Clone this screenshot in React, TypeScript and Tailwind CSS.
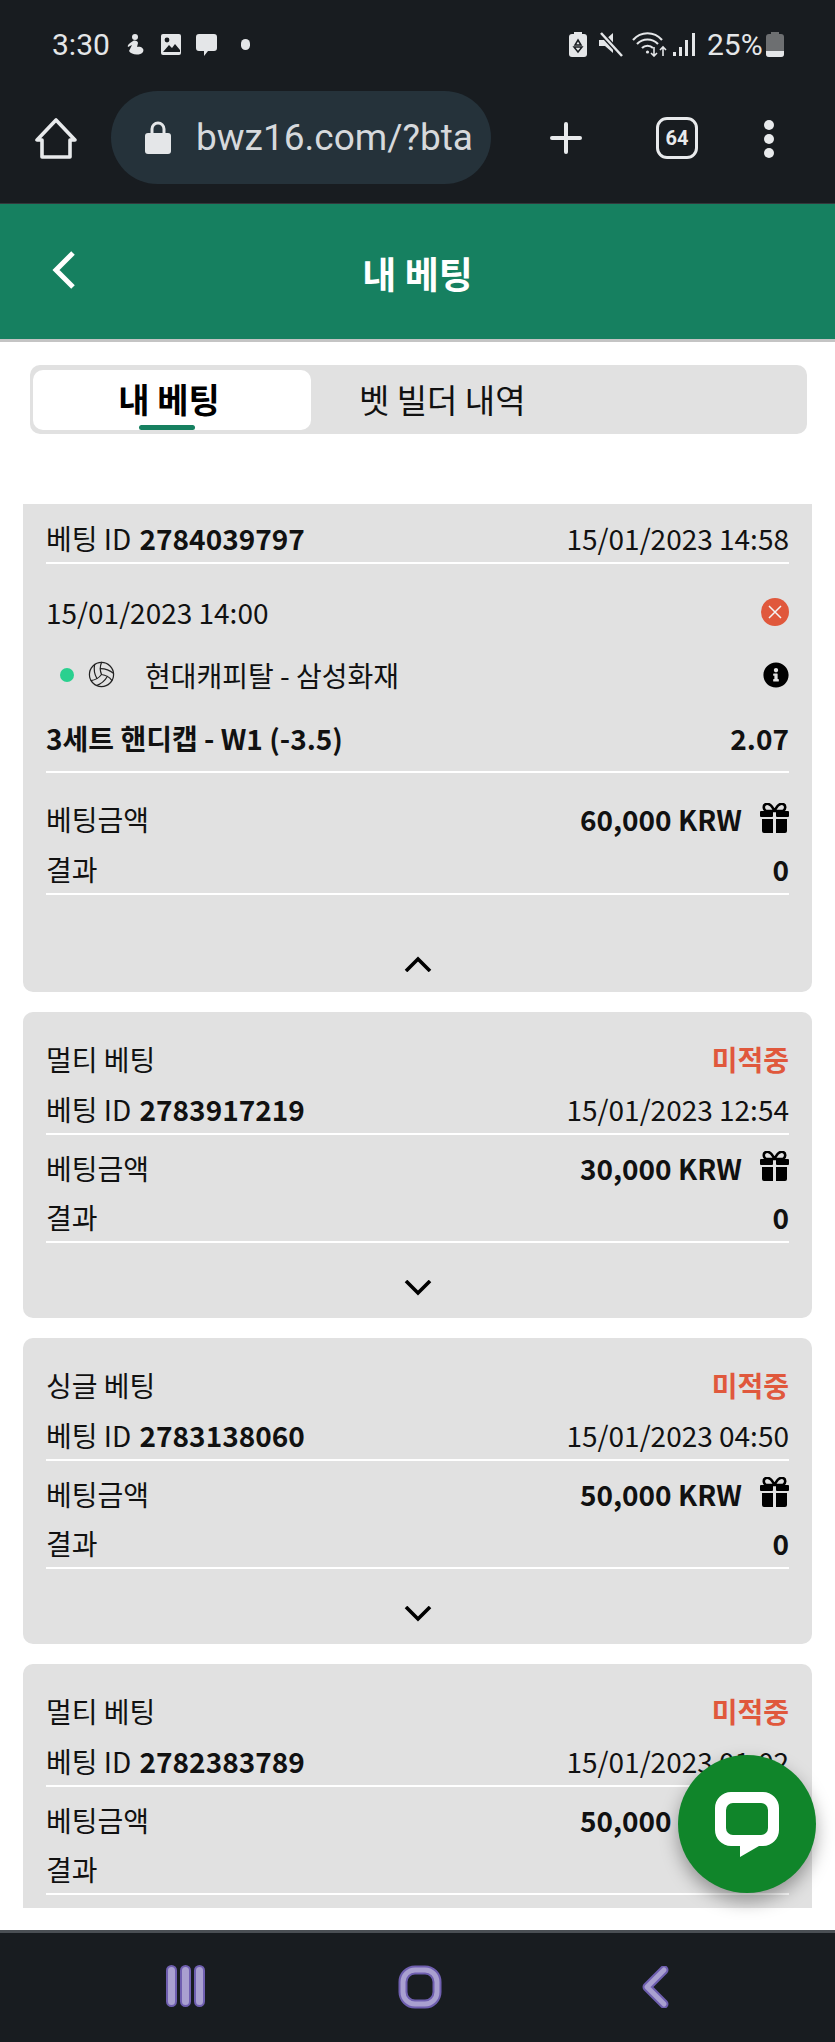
import React from 'react';
import { Plus, Volleyball } from 'lucide-react';
import { FaInfoCircle } from 'react-icons/fa';

const FONT = "font-['Noto_Sans_CJK_KR','Noto_Sans',sans-serif]";

/* ── Status bar icons ── */
const StatusLeftIcons = () => (
  <div className="flex items-center ml-[15px]">
    <svg width="20" height="23" viewBox="0 0 20 23" fill="#e4e6e8">
      <circle cx="10" cy="4" r="3" />
      <path d="M8 8c-3 2-6 4-5 6l4-2-3 6c2 4 11 5 14 1 2-4-3-6-6-5l1-4c0-2-3-3-5-2z" />
    </svg>
    <svg width="22" height="23" viewBox="0 0 22 23" className="ml-[15px]">
      <rect x="1" y="1" width="20" height="21" rx="2" fill="#e4e6e8" />
      <circle cx="7" cy="7" r="2.4" fill="#181c20" />
      <path d="M3 19l6-7 3 3 3-4 5 6v2H3z" fill="#181c20" />
    </svg>
    <svg width="23" height="24" viewBox="0 0 23 24" fill="#e4e6e8" className="ml-[13px]">
      <path d="M4 1h15a3 3 0 0 1 3 3v11a3 3 0 0 1-3 3h-6l-4 5v-5H4a3 3 0 0 1-3-3V4a3 3 0 0 1 3-3z" />
    </svg>
    <div className="w-[9px] h-[11px] rounded-full bg-[#e4e6e8] ml-[23px]" />
  </div>
);

const StatusRightIcons = () => (
  <div className="flex items-center">
    <svg width="18" height="25" viewBox="0 0 18 25">
      <rect x="5" y="0" width="8" height="3" fill="#e4e6e8" />
      <rect x="0" y="2" width="18" height="23" rx="3" fill="#e4e6e8" />
      <path d="M9 8l3 5H6zM5 15h8l-4 5z" fill="none" stroke="#181c20" strokeWidth="1.5" />
    </svg>
    <svg width="26" height="25" viewBox="0 0 26 25" className="ml-[11px]">
      <path d="M1 8h6l8-7v20l-8-7H1z" fill="#e4e6e8" />
      <path d="M3 1l21 23" stroke="#181c20" strokeWidth="5" />
      <path d="M3 1l21 23" stroke="#e4e6e8" strokeWidth="2.5" />
    </svg>
    <svg width="36" height="25" viewBox="0 0 36 25" fill="none" stroke="#e4e6e8" strokeWidth="2.2" className="ml-[8px]">
      <path d="M1 8c8-9 21-9 29 0M5 12c6-6 15-6 21 0M10 16c3-3 8-3 11 0" />
      <circle cx="15.5" cy="20" r="1.6" fill="#e4e6e8" stroke="none" />
      <path d="M22 15v9M19 21l3 3 3-3M31 24v-9M28 18l3-3 3 3" strokeWidth="1.6" />
    </svg>
    <svg width="22" height="25" viewBox="0 0 22 25" fill="#e4e6e8" className="ml-[5px]">
      <rect x="0" y="20" width="3" height="4" />
      <rect x="6" y="15" width="3" height="9" />
      <rect x="12" y="8" width="3" height="16" />
      <rect x="19" y="1" width="3" height="23" />
    </svg>
    <span className="font-['Roboto',sans-serif] text-[30px] leading-none text-[#e4e6e8] ml-[12px] w-[59px]">25%</span>
    <svg width="18" height="25" viewBox="0 0 18 25">
      <rect x="5" y="0" width="8" height="3" fill="#6d6f71" />
      <rect x="0" y="2" width="18" height="23" rx="3" fill="#6d6f71" />
      <path d="M0 19h18v3a3 3 0 0 1-3 3H3a3 3 0 0 1-3-3z" fill="#e4e6e8" />
    </svg>
  </div>
);

const BrowserBar = () => (
  <div className="flex items-start pl-[35px]">
    <svg width="42" height="42" viewBox="0 0 42 42" fill="none" stroke="#e8eaec" strokeWidth="3.6" strokeLinejoin="round" className="mt-[26px]">
      <path d="M21 3L2 23h5v17h28V23h5z" />
    </svg>
    <div className="ml-[34px] w-[380px] h-[93px] rounded-[47px] bg-[#25323a] flex items-center pl-[34px]">
      <svg width="26" height="33" viewBox="0 0 26 33">
        <path d="M7 14V8a6 6 0 0 1 12 0v6" fill="none" stroke="#e4e6e8" strokeWidth="3" />
        <rect x="0" y="12" width="26" height="21" rx="3" fill="#e4e6e8" />
      </svg>
      <span className="ml-[25px] font-['Roboto',sans-serif] text-[37px] leading-none text-[#d6d9dc] whitespace-nowrap">bwz16.com/?bta</span>
    </div>
    <Plus size={48} strokeWidth={2} color="#e8eaec" className="ml-[51px] mt-[23px]" />
    <div className="ml-[66px] mt-[26px] w-[42px] h-[42px] rounded-[11px] border-[3.5px] border-[#e8eaec] flex items-center justify-center">
      <span className="font-['Roboto',sans-serif] font-bold text-[20px] leading-none text-[#e8eaec]">64</span>
    </div>
    <div className="ml-[66px] mt-[29px] flex flex-col gap-[4px]">
      <div className="w-[10px] h-[10px] rounded-full bg-[#e8eaec]" />
      <div className="w-[10px] h-[10px] rounded-full bg-[#e8eaec]" />
      <div className="w-[10px] h-[10px] rounded-full bg-[#e8eaec]" />
    </div>
  </div>
);

/* ── Card parts ── */
const Divider = () => <div className="h-[2px] bg-white" />;

const BetIdRow: React.FC<{ id: string; date: string }> = ({ id, date }) => (
  <div className="h-[49px] flex items-center justify-between">
    <span>
      베팅 ID <b className="font-bold ml-[2px]">{id}</b>
    </span>
    <span>{date}</span>
  </div>
);

const GiftIcon = () => (
  <svg width="29" height="30" viewBox="0 0 29 30" fill="#000" className="ml-[18px] -mt-[3px]">
    <path d="M14.5 8C12 3 9 0 6 1 3 2 3 6 6 8zM14.5 8c2.500-5 5.500-8 8.500-7 3 1 3 5 0 7z" fill="none" stroke="#000" strokeWidth="2.600" />
    <rect x="0" y="8" width="13" height="6" rx="1" />
    <rect x="16" y="8" width="13" height="6" rx="1" />
    <path d="M2 16h11v14H4a2 2 0 0 1-2-2zM16 16h11v12a2 2 0 0 1-2 2h-9z" />
  </svg>
);

const Amount: React.FC<{ value: string }> = ({ value }) => (
  <div className="flex items-center">
    <b className="font-bold">{value}</b>
    <GiftIcon />
  </div>
);

const Chevron: React.FC<{ up?: boolean }> = ({ up }) => (
  <svg width="28" height="16" viewBox="0 0 28 16" fill="none" stroke="#000" strokeWidth="3.6" className={up ? '' : 'rotate-180'}>
    <path d="M2 15L14 3l12 12" />
  </svg>
);

const SummaryCard: React.FC<{ kind: string; id: string; date: string; amount: string }> = ({
  kind,
  id,
  date,
  amount,
}) => (
  <div className="bg-[#e1e1e1] rounded-[10px] px-[23px] pt-[22px] h-[306px]">
    <div className="h-[50px] flex items-center justify-between">
      <span>{kind}</span>
      <b className="font-bold text-[#e0583c]">미적중</b>
    </div>
    <BetIdRow id={id} date={date} />
    <Divider />
    <div className="pt-[8px]">
      <div className="h-[49px] flex items-center justify-between">
        <span>베팅금액</span>
        <Amount value={amount} />
      </div>
      <div className="h-[49px] flex items-center justify-between">
        <span>결과</span>
        <b className="font-bold">0</b>
      </div>
    </div>
    <Divider />
    <div className="h-[72px] pt-[18px] flex items-center justify-center">
      <Chevron />
    </div>
  </div>
);

const ExpandedCard = () => (
  <div className="bg-[#e1e1e1] rounded-b-[10px] px-[23px] pt-[9px] h-[488px]">
    <BetIdRow id="2784039797" date="15/01/2023 14:58" />
    <Divider />
    <div className="pt-[22px] h-[74px] flex items-center justify-between">
      <span>15/01/2023 14:00</span>
      <div className="w-[28px] h-[28px] rounded-full bg-[#e0583c] flex items-center justify-center">
        <svg width="16" height="16" viewBox="0 0 16 16" stroke="#f4f4f4" strokeWidth="1.5">
          <path d="M2 2l12 12M14 2L2 14" />
        </svg>
      </div>
    </div>
    <div className="h-[73px] flex items-center justify-between">
      <div className="flex items-center pl-[14px]">
        <div className="w-[14px] h-[14px] rounded-full bg-[#2ad08f]" />
        <Volleyball size={29} strokeWidth={1} className="ml-[13px] text-[#222]" />
        <span className="ml-[29px]">현대캐피탈 - 삼성화재</span>
      </div>
      <FaInfoCircle size={26} className="text-black" />
    </div>
    <div className="h-[53px] flex items-center justify-between font-bold">
      <span>3세트 핸디캡 - W1 (-3.5)</span>
      <span>2.07</span>
    </div>
    <div className="h-[7px]" />
    <Divider />
    <div className="pt-[21px]">
      <div className="h-[50px] flex items-center justify-between">
        <span>베팅금액</span>
        <Amount value="60,000 KRW" />
      </div>
      <div className="h-[49px] flex items-center justify-between">
        <span>결과</span>
        <b className="font-bold">0</b>
      </div>
    </div>
    <Divider />
    <div className="h-[92px] pt-[46px] flex items-center justify-center">
      <Chevron up />
    </div>
  </div>
);

export default function App() {
  return (
    <div className={`relative w-[835px] h-[2042px] overflow-hidden bg-white flex flex-col ${FONT}`}>
      {/* ── Phone top bars ── */}
      <div className="h-[204px] bg-[#181c20] border-b border-[#33383c] shrink-0">
        <div className="h-[91px] flex items-center justify-between pl-[52px] pr-[51px] pb-[2px]">
          <div className="flex items-center">
            <span className="font-['Roboto',sans-serif] text-[30px] leading-none text-[#e4e6e8]">3:30</span>
            <StatusLeftIcons />
          </div>
          <StatusRightIcons />
        </div>
        <BrowserBar />
      </div>

      {/* ── Page header ── */}
      <div className="h-[138px] shrink-0 bg-[#168060] border-b-[3px] border-[#c4c4c4] relative flex items-center justify-center">
        <svg width="24" height="38" viewBox="0 0 24 38" fill="none" stroke="#fff" strokeWidth="5" className="absolute left-[52px] top-[33px] translate-y-[14px]">
          <path d="M21 2L4 19l17 17" />
        </svg>
        <span className="font-bold text-[37px] text-white leading-none pt-[3px]">내 베팅</span>
      </div>

      {/* ── Content ── */}
      <div className="flex-1 min-h-0 mb-[22px] overflow-hidden text-[28px] leading-none text-[#111]">
        <div className="mt-[23px] ml-[30px] w-[777px] h-[69px] rounded-[10px] bg-[#e1e1e1] p-[5px_3px_4px] flex items-stretch">
          <div className="relative w-[278px] rounded-[10px] bg-white flex items-center justify-center pb-[2px] pr-[6px]">
            <span className="font-bold text-[34px] text-black">내 베팅</span>
            <div className="absolute left-[106px] bottom-0 w-[56px] h-[5px] rounded-[3px] bg-[#168060]" />
          </div>
          <div className="flex items-center pl-[48px] pb-[2px] text-[33px]">벳 빌더 내역</div>
        </div>

        <div className="mt-[70px] mx-[23px] flex flex-col gap-[20px]">
          <ExpandedCard />
          <SummaryCard kind="멀티 베팅" id="2783917219" date="15/01/2023 12:54" amount="30,000 KRW" />
          <SummaryCard kind="싱글 베팅" id="2783138060" date="15/01/2023 04:50" amount="50,000 KRW" />
          <SummaryCard kind="멀티 베팅" id="2782383789" date="15/01/2023 01:02" amount="50,000 KRW" />
        </div>
      </div>

      {/* ── Chat button ── */}
      <div className="absolute left-[678px] top-[1755px] w-[138px] h-[138px] rounded-full bg-[#10852a] shadow-[0_8px_18px_rgba(0,0,0,0.35)] flex items-center justify-center">
        <svg width="64" height="66" viewBox="0 0 64 66" className="mt-[2px]">
          <path
            d="M16 0h32a16 16 0 0 1 16 16v22a16 16 0 0 1-16 16H44L25 65V54h-9A16 16 0 0 1 0 38V16A16 16 0 0 1 16 0z"
            fill="#fff"
          />
          <path
            d="M18 11h28a7 7 0 0 1 7 7v18a7 7 0 0 1-7 7H18a7 7 0 0 1-7-7V18a7 7 0 0 1 7-7z"
            fill="#10852a"
          />
        </svg>
      </div>

      {/* ── Phone nav bar ── */}
      <div className="h-[112px] shrink-0 bg-[#181c20] border-t-[3px] border-[#4a4f54] relative flex items-start">
        <div className="ml-[166px] mt-[32px] flex gap-[3px]">
          <div className="w-[11px] h-[42px] rounded-full bg-[#a9a0d0] border-[2px] border-[#6f5fb0]" />
          <div className="w-[11px] h-[42px] rounded-full bg-[#a9a0d0] border-[2px] border-[#6f5fb0]" />
          <div className="w-[11px] h-[42px] rounded-full bg-[#a9a0d0] border-[2px] border-[#6f5fb0]" />
        </div>
        <svg width="44" height="44" viewBox="0 0 44 44" fill="none" className="ml-[193px] mt-[32px]">
          <rect x="5" y="5" width="34" height="34" rx="12" stroke="#6f5fb0" strokeWidth="9" />
          <rect x="5" y="5" width="34" height="34" rx="12" stroke="#a9a0d0" strokeWidth="5" />
        </svg>
        <svg width="28" height="42" viewBox="0 0 28 42" fill="none" strokeLinecap="round" strokeLinejoin="round" className="ml-[199px] mt-[33px]">
          <path d="M23 4L6 21l17 17" stroke="#6f5fb0" strokeWidth="9" />
          <path d="M23 4L6 21l17 17" stroke="#a9a0d0" strokeWidth="5" />
        </svg>
      </div>
    </div>
  );
}
